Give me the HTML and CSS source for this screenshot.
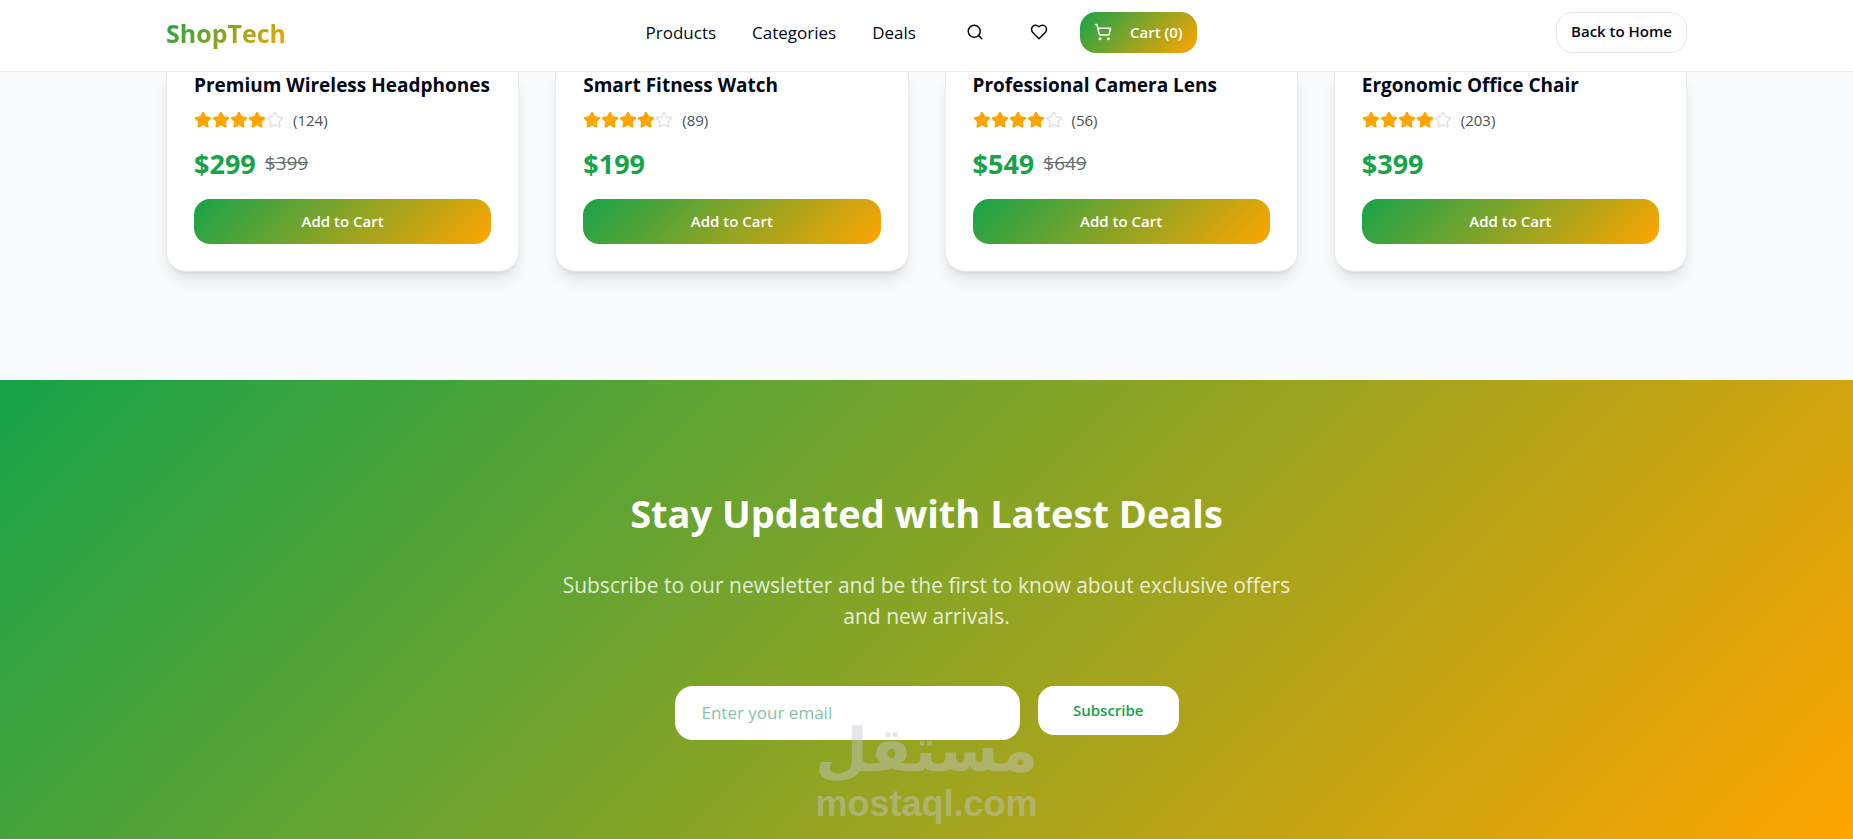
FILE: index.html
```html
<!DOCTYPE html>
<html lang="en">
<head>
  <meta charset="UTF-8" />
  <meta name="viewport" content="width=device-width, initial-scale=1.0"/>
  <title>ShopTech</title>
  <link rel="stylesheet" href="styles.css">
</head>
<body>
  <svg class="sprite" aria-hidden="true">
    <symbol id="star" viewBox="0 0 24 24">
      <path d="M11.525 2.295a.53.53 0 0 1 .95 0l2.31 4.679a2.123 2.123 0 0 0 1.595 1.16l5.166.756a.53.53 0 0 1 .294.904l-3.736 3.638a2.123 2.123 0 0 0-.611 1.878l.882 5.14a.53.53 0 0 1-.771.56l-4.618-2.428a2.122 2.122 0 0 0-1.973 0L6.396 21.01a.53.53 0 0 1-.77-.56l.881-5.139a2.122 2.122 0 0 0-.611-1.879L2.16 9.795a.53.53 0 0 1 .294-.906l5.165-.755a2.122 2.122 0 0 0 1.597-1.16z"/>
    </symbol>
  </svg>

  <header class="header">
    <div class="container header-inner">
      <div class="logo">ShopTech</div>
      <nav class="nav">
        <a href="#products">Products</a>
        <a href="#categories">Categories</a>
        <a href="#deals">Deals</a>
        <div class="actions">
          <button class="btn btn-icon" type="button" aria-label="Search">
            <svg class="icon" viewBox="0 0 24 24"><circle cx="11" cy="11" r="8"/><path d="m21 21-4.3-4.3"/></svg>
          </button>
          <button class="btn btn-icon" type="button" aria-label="Wishlist">
            <svg class="icon" viewBox="0 0 24 24"><path d="M19 14c1.49-1.46 3-3.21 3-5.5A5.5 5.5 0 0 0 16.5 3c-1.76 0-3 .5-4.5 2-1.5-1.5-2.74-2-4.5-2A5.5 5.5 0 0 0 2 8.5c0 2.3 1.5 4.05 3 5.5l7 7Z"/></svg>
          </button>
          <button class="btn btn-cart" type="button">
            <svg class="icon" viewBox="0 0 24 24"><circle cx="8" cy="21" r="1"/><circle cx="19" cy="21" r="1"/><path d="M2.05 2.05h2l2.66 12.42a2 2 0 0 0 2 1.58h9.78a2 2 0 0 0 1.95-1.57l1.65-7.43H5.12"/></svg>
            Cart (0)
          </button>
        </div>
      </nav>
      <a class="btn btn-outline" href="#home">Back to Home</a>
    </div>
  </header>

  <main>
    <section class="products" id="products">
      <div class="container grid">
        <article class="card">
          <h3>Premium Wireless Headphones</h3>
          <div class="rating">
            <svg class="star"><use href="#star"/></svg><svg class="star"><use href="#star"/></svg><svg class="star"><use href="#star"/></svg><svg class="star"><use href="#star"/></svg><svg class="star empty"><use href="#star"/></svg>
            <span>(124)</span>
          </div>
          <div class="price"><strong>$299</strong><del>$399</del></div>
          <button class="btn btn-add" type="button">Add to Cart</button>
        </article>
        <article class="card">
          <h3>Smart Fitness Watch</h3>
          <div class="rating">
            <svg class="star"><use href="#star"/></svg><svg class="star"><use href="#star"/></svg><svg class="star"><use href="#star"/></svg><svg class="star"><use href="#star"/></svg><svg class="star empty"><use href="#star"/></svg>
            <span>(89)</span>
          </div>
          <div class="price"><strong>$199</strong></div>
          <button class="btn btn-add" type="button">Add to Cart</button>
        </article>
        <article class="card">
          <h3>Professional Camera Lens</h3>
          <div class="rating">
            <svg class="star"><use href="#star"/></svg><svg class="star"><use href="#star"/></svg><svg class="star"><use href="#star"/></svg><svg class="star"><use href="#star"/></svg><svg class="star empty"><use href="#star"/></svg>
            <span>(56)</span>
          </div>
          <div class="price"><strong>$549</strong><del>$649</del></div>
          <button class="btn btn-add" type="button">Add to Cart</button>
        </article>
        <article class="card">
          <h3>Ergonomic Office Chair</h3>
          <div class="rating">
            <svg class="star"><use href="#star"/></svg><svg class="star"><use href="#star"/></svg><svg class="star"><use href="#star"/></svg><svg class="star"><use href="#star"/></svg><svg class="star empty"><use href="#star"/></svg>
            <span>(203)</span>
          </div>
          <div class="price"><strong>$399</strong></div>
          <button class="btn btn-add" type="button">Add to Cart</button>
        </article>
      </div>
    </section>

    <section class="newsletter">
      <h2>Stay Updated with Latest Deals</h2>
      <p>Subscribe to our newsletter and be the first to know about exclusive offers and new arrivals.</p>
      <form class="subscribe">
        <input type="email" placeholder="Enter your email" aria-label="Enter your email" />
        <button class="btn" type="submit">Subscribe</button>
      </form>
      <div class="watermark">
        <span class="watermark-ar" lang="ar" dir="rtl">مستقل</span>
        <span class="watermark-en">mostaql.com</span>
      </div>
    </section>
  </main>
</body>
</html>
```

FILE: styles.css
```css
* {
  box-sizing: border-box;
}

body {
  margin: 0;
  height: 100vh;
  overflow: hidden;
  font-family: 'Segoe UI', 'Open Sans', sans-serif;
  font-size: 17px;
  line-height: 27px;
  color: #020817;
  background: #f8fafc;
}

.sprite {
  display: none;
}

.container {
  width: 100%;
  max-width: 1557px;
  margin: 0 auto;
  padding: 0 18px;
}

/* Header */
.header {
  position: sticky;
  top: 0;
  z-index: 10;
  background: white;
  border-bottom: 1px solid #eef0f2;
}

.header-inner {
  display: flex;
  justify-content: space-between;
  align-items: center;
  padding-top: 12px;
  padding-bottom: 18px;
}

.logo {
  font-size: 25px;
  font-weight: bold;
  line-height: 36px;
  background: linear-gradient(135deg, #16a34a, #ffa500);
  -webkit-background-clip: text;
  background-clip: text;
  color: transparent;
}

.nav {
  display: flex;
  align-items: center;
  gap: 36px;
}

.nav a {
  color: inherit;
  text-decoration: none;
}

.actions {
  display: flex;
  gap: 18px;
}

.btn {
  display: inline-flex;
  align-items: center;
  justify-content: center;
  height: 41px;
  padding: 0 14px 2px;
  border: none;
  border-radius: 16px;
  font-family: inherit;
  font-size: 15px;
  font-weight: 600;
  color: inherit;
  background: white;
  text-decoration: none;
  cursor: pointer;
}

.icon {
  width: 18px;
  height: 18px;
  fill: none;
  stroke: currentColor;
  stroke-width: 2;
  stroke-linecap: round;
  stroke-linejoin: round;
}

.btn-cart {
  gap: 18px;
  color: white;
  background: linear-gradient(135deg, #16a34a, #ffa500);
}

.btn-outline {
  border: 1px solid #e2e8e6;
}

/* Products */
.products {
  padding-bottom: 108px;
}

.grid {
  display: grid;
  grid-template-columns: repeat(4, 1fr);
  gap: 36px;
}

.card {
  padding: 0 27px 27px;
  background: white;
  border: 1px solid #e9eeec;
  border-top: none;
  border-bottom-color: #dce4e0;
  border-radius: 0 0 20px 20px;
  box-shadow: 0 10px 15px -3px rgba(0,0,0,0.1), 0 4px 6px -4px rgba(0,0,0,0.1);
}

.card h3 {
  margin: 0 0 10px;
  font-size: 19px;
  font-weight: bold;
  white-space: nowrap;
}

.rating {
  display: flex;
  align-items: center;
  height: 22px;
  margin-bottom: 16px;
}

.rating span {
  margin-left: 9px;
  font-size: 15px;
  color: #4b5054;
}

.star {
  width: 18px;
  height: 18px;
  fill: #ffa500;
  stroke: #ffa500;
  stroke-width: 2;
}

.star.empty {
  fill: none;
  stroke: #dfe3e2;
}

.price {
  display: flex;
  align-items: center;
  gap: 9px;
  height: 32px;
  margin-bottom: 20px;
}

.price strong {
  font-size: 27px;
  color: #16a34a;
}

.price del {
  font-size: 19px;
  color: #65706b;
}

.btn-add {
  width: 100%;
  height: 45px;
  color: white;
  background: linear-gradient(135deg, #16a34a, #ffa500);
}

/* Newsletter */
.newsletter {
  position: relative;
  padding: 108px 18px;
  text-align: center;
  color: white;
  background: linear-gradient(135deg, #16a34a, #ffa500);
}

.newsletter h2 {
  margin: 0 0 32px;
  font-size: 38px;
  line-height: 50px;
}

.newsletter p {
  max-width: 756px;
  margin: 0 auto 54px;
  font-size: 21px;
  line-height: 31px;
  color: rgba(255,255,255,0.82);
}

.subscribe {
  display: flex;
  align-items: flex-start;
  gap: 18px;
  max-width: 504px;
  margin: 0 auto;
}

.subscribe input {
  flex: 1;
  min-width: 0;
  height: 54px;
  padding: 0 27px 2px;
  border: none;
  border-radius: 18px;
  font-family: inherit;
  font-size: 17px;
  background: white;
}

.subscribe input::placeholder {
  color: #8abfae;
}

.subscribe .btn {
  height: 49px;
  padding: 0 35px 2px;
  color: #16a34a;
}

.watermark {
  position: absolute;
  left: 0;
  right: 0;
  top: 334px;
  display: flex;
  flex-direction: column;
  align-items: center;
  opacity: 0.44;
  color: #c3c8cf;
  font-weight: bold;
  pointer-events: none;
}

.watermark-ar {
  font-family: 'DejaVu Sans', sans-serif;
  font-size: 61px;
  line-height: 72px;
}

.watermark-en {
  font-family: 'Liberation Sans', Arial, sans-serif;
  font-size: 36px;
  line-height: 36px;
}
```
